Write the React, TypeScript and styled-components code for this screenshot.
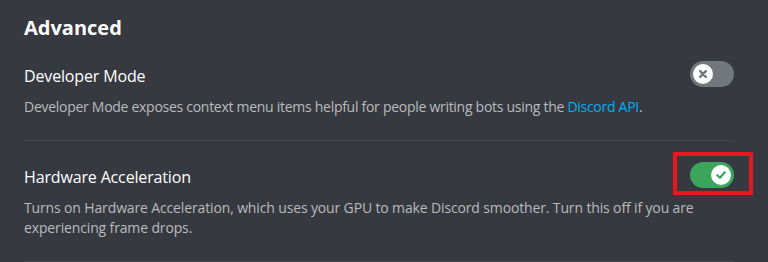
import React from "react";
import styled, { createGlobalStyle } from "styled-components";

const GlobalStyle = createGlobalStyle`
  html, body {
    margin: 0;
    padding: 0;
    background: #36393f;
  }
  body {
    font-family: "Open Sans", "Noto Sans", sans-serif;
    -webkit-font-smoothing: antialiased;
  }
  * { box-sizing: border-box; }
`;

const Page = styled.div`
  width: 768px;
  height: 262px;
  overflow: hidden;
  background: #36393f;
  padding: 16px 34px 0 24px;
`;

const Heading = styled.h2`
  margin: 0;
  font-size: 20px;
  line-height: 24px;
  font-weight: 700;
  color: #ffffff;
`;

const Setting = styled.section`
  margin-top: 21px;
`;

const Row = styled.div`
  display: flex;
  justify-content: space-between;
  align-items: flex-start;
`;

const Title = styled.div`
  padding-top: 5px;
  font-size: 16px;
  line-height: 20px;
  font-weight: 500;
  letter-spacing: -0.15px;
  color: #ffffff;
`;

const Description = styled.div<{ $tracking: number }>`
  margin-top: 10px;
  font-size: 14px;
  line-height: 20px;
  font-weight: 400;
  letter-spacing: ${(p) => p.$tracking}px;
  color: #b9bbbe;
`;

const Link = styled.a`
  color: #00aff4;
  text-decoration: none;
`;

const Divider = styled.div`
  margin-top: 23px;
  height: 1px;
  background: #43464c;
`;

const ToggleWrap = styled.div`
  position: relative;
  flex: none;
`;

const Track = styled.div<{ $on: boolean }>`
  width: 44px;
  height: 26px;
  border-radius: 13px;
  background: ${(p) => (p.$on ? "#3ba55c" : "#72767d")};
  display: flex;
  align-items: center;
  justify-content: ${(p) => (p.$on ? "flex-end" : "flex-start")};
  padding: 0 3px;
`;

const Knob = styled.div`
  width: 20px;
  height: 20px;
  border-radius: 50%;
  background: #ffffff;
  display: flex;
  align-items: center;
  justify-content: center;
`;

const Highlight = styled.div`
  position: absolute;
  left: -17px;
  right: -19px;
  top: -10px;
  bottom: -7px;
  border: 4px solid #e8161f;
  pointer-events: none;
`;

const Toggle: React.FC<{ on: boolean; highlighted?: boolean }> = ({ on, highlighted }) => (
  <ToggleWrap>
    <Track $on={on}>
      <Knob>
        {on ? (
          <svg width="14" height="14" viewBox="0 0 14 14">
            <path
              d="M3.3 7.2 L6 9.8 L10.8 4.3"
              fill="none"
              stroke="#3ba55c"
              strokeWidth="2.2"
              strokeLinecap="round"
              strokeLinejoin="round"
            />
          </svg>
        ) : (
          <svg width="14" height="14" viewBox="0 0 14 14">
            <path
              d="M4.2 4.2 L9.8 9.8 M9.8 4.2 L4.2 9.8"
              fill="none"
              stroke="#72767d"
              strokeWidth="2.4"
              strokeLinecap="round"
            />
          </svg>
        )}
      </Knob>
    </Track>
    {highlighted && <Highlight />}
  </ToggleWrap>
);

export default function App() {
  return (
    <>
      <GlobalStyle />
      <Page>
        <Heading>Advanced</Heading>
        <Setting>
          <Row>
            <Title>Developer Mode</Title>
            <Toggle on={false} />
          </Row>
          <Description $tracking={-0.28}>
            Developer Mode exposes context menu items helpful for people writing bots using the{" "}
            <Link href="#">Discord API</Link>.
          </Description>
          <Divider />
        </Setting>
        <Setting>
          <Row>
            <Title>Hardware Acceleration</Title>
            <Toggle on highlighted />
          </Row>
          <Description $tracking={-0.14}>
            Turns on Hardware Acceleration, which uses your GPU to make Discord smoother. Turn this off if you are
            experiencing frame drops.
          </Description>
          <Divider />
        </Setting>
      </Page>
    </>
  );
}
